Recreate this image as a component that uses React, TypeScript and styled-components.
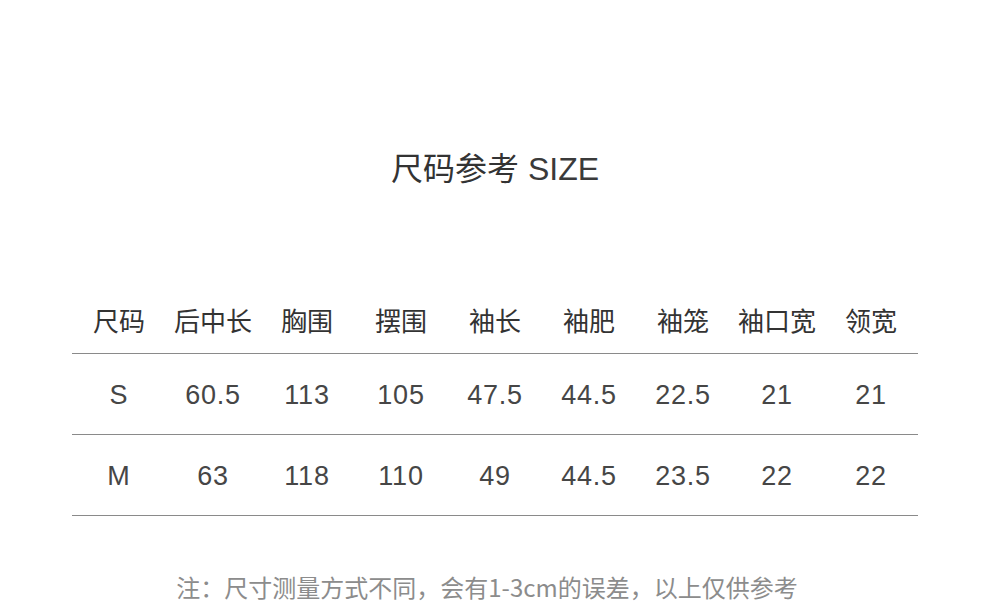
import React from "react";
import styled, { createGlobalStyle } from "styled-components";

const GlobalStyle = createGlobalStyle`
  html, body {
    margin: 0;
    padding: 0;
    background: #ffffff;
  }
`;

const Page = styled.div`
  width: 990px;
  height: 601px;
  overflow: hidden;
  display: flex;
  flex-direction: column;
  align-items: center;
  padding-top: 146px;
  box-sizing: border-box;
`;

const Title = styled.h1`
  margin: 0;
  height: 40px;
  line-height: 40px;
  font-size: 32px;
  font-weight: 400;
  color: #333;
  font-family: "Noto Sans CJK SC", sans-serif;
  span {
    font-family: "Liberation Sans", Arial, sans-serif;
    font-weight: 400;
    font-size: 32px;
    margin-left: 9px;
    color: #3a3a3a;
  }
`;

const Table = styled.div`
  margin-top: 102px;
  width: 846px;
  display: grid;
  grid-template-columns: repeat(9, 1fr);
`;

const HeaderCell = styled.div`
  height: 66px;
  padding-bottom: 2px;
  display: flex;
  align-items: center;
  justify-content: center;
  font-family: "Noto Sans CJK SC", sans-serif;
  font-size: 26px;
  color: #333;
  border-bottom: 1px solid #8a8a8a;
  box-sizing: border-box;
  white-space: nowrap;
`;

const Cell = styled.div`
  height: 81px;
  padding-top: 3px;
  display: flex;
  align-items: center;
  justify-content: center;
  font-family: "Liberation Sans", Arial, sans-serif;
  font-size: 27px;
  letter-spacing: 0.8px;
  color: #464646;
  border-bottom: 1px solid #8a8a8a;
  box-sizing: border-box;
`;

const Note = styled.p`
  margin: 58px 16px 0 0;
  line-height: 26px;
  font-family: "Noto Sans CJK SC", sans-serif;
  font-size: 24px;
  color: #8c8c8c;
  white-space: nowrap;
`;

const headers = ["尺码", "后中长", "胸围", "摆围", "袖长", "袖肥", "袖笼", "袖口宽", "领宽"];

const rows = [
  ["S", "60.5", "113", "105", "47.5", "44.5", "22.5", "21", "21"],
  ["M", "63", "118", "110", "49", "44.5", "23.5", "22", "22"],
];

const App: React.FC = () => {
  return (
    <>
      <GlobalStyle />
      <Page>
        <Title>
          尺码参考<span>SIZE</span>
        </Title>
        <Table>
          {headers.map((h) => (
            <HeaderCell key={h}>{h}</HeaderCell>
          ))}
          {rows.map((row, i) =>
            row.map((v, j) => <Cell key={`${i}-${j}`}>{v}</Cell>)
          )}
        </Table>
        <Note>注：尺寸测量方式不同，会有1-3cm的误差，以上仅供参考</Note>
      </Page>
    </>
  );
};

export default App;
